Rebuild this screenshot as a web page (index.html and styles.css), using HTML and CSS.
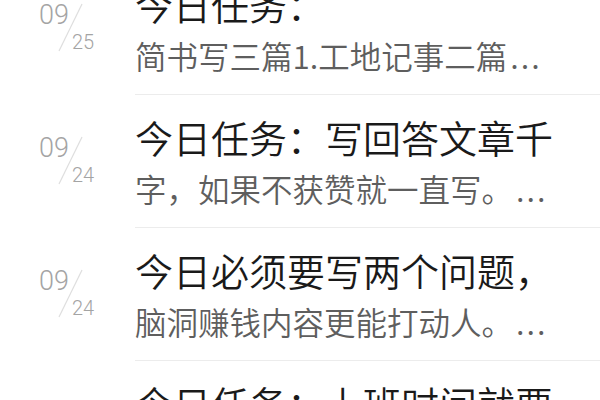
FILE: index.html
```html
<!DOCTYPE html>
<html lang="zh-CN">
<head>
<meta charset="utf-8">
<title>任务列表</title>
<link rel="stylesheet" href="styles.css">
</head>
<body>
<div class="list">
  <div class="row">
    <div class="date">
      <span class="month">09</span>
      <span class="day">25</span>
      <svg class="slash" width="30" height="52" viewBox="0 0 30 52"><line x1="26" y1="2" x2="3" y2="49" stroke="#dedede" stroke-width="1.2"/></svg>
    </div>
    <div class="content">
      <div class="title">今日任务：</div>
      <div class="summary">简书写三篇1.工地记事二篇<span class="ell">...</span></div>
    </div>
  </div>
  <div class="row">
    <div class="date">
      <span class="month">09</span>
      <span class="day">24</span>
      <svg class="slash" width="30" height="52" viewBox="0 0 30 52"><line x1="26" y1="2" x2="3" y2="49" stroke="#dedede" stroke-width="1.2"/></svg>
    </div>
    <div class="content">
      <div class="title">今日任务：写回答文章千</div>
      <div class="summary">字，如果不获赞就一直写。<span class="ell">...</span></div>
    </div>
  </div>
  <div class="row">
    <div class="date">
      <span class="month">09</span>
      <span class="day">24</span>
      <svg class="slash" width="30" height="52" viewBox="0 0 30 52"><line x1="26" y1="2" x2="3" y2="49" stroke="#dedede" stroke-width="1.2"/></svg>
    </div>
    <div class="content">
      <div class="title">今日必须要写两个问题，</div>
      <div class="summary">脑洞赚钱内容更能打动人。<span class="ell">...</span></div>
    </div>
  </div>
  <div class="row">
    <div class="date">
      <span class="month">09</span>
      <span class="day">23</span>
      <svg class="slash" width="30" height="52" viewBox="0 0 30 52"><line x1="26" y1="2" x2="3" y2="49" stroke="#dedede" stroke-width="1.2"/></svg>
    </div>
    <div class="content">
      <div class="title">今日任务：上班时间就要</div>
      <div class="summary">写完两篇文章再下班。<span class="ell">...</span></div>
    </div>
  </div>
</div>
</body>
</html>
```
FILE: styles.css
```css
html, body {
  margin: 0;
  padding: 0;
  background: #ffffff;
  overflow: hidden;
}
body {
  font-family: "Noto Sans CJK SC", sans-serif;
  width: 600px;
  height: 400px;
}
.list {
  margin-top: -38px;
}
.row {
  display: flex;
}
.date {
  flex: 0 0 135px;
  position: relative;
  display: flex;
  flex-direction: column;
  align-items: flex-start;
  padding: 40px 0 0 39px;
  box-sizing: border-box;
  font-family: Roboto, sans-serif;
  font-weight: 300;
  color: #a4a4a4;
}
.month {
  font-size: 27px;
  line-height: 27px;
}
.day {
  font-size: 20px;
  line-height: 20px;
  margin: 3px 0 0 33px;
}
.slash {
  position: absolute;
  left: 56px;
  top: 40px;
}
.content {
  flex: 1;
  min-width: 0;
  padding: 17px 20px 18px 0;
  border-bottom: 1px solid #ececec;
}
.title {
  font-size: 38px;
  font-weight: 350;
  line-height: 50px;
  height: 50px;
  color: #1a1a1a;
  white-space: nowrap;
  overflow: hidden;
}
.summary {
  margin-top: 5px;
  font-size: 31.5px;
  font-weight: 350;
  line-height: 42px;
  height: 42px;
  color: #5e5e5e;
  white-space: nowrap;
  overflow: hidden;
}
.ell {
  margin-left: 3px;
  letter-spacing: 2px;
}
```
